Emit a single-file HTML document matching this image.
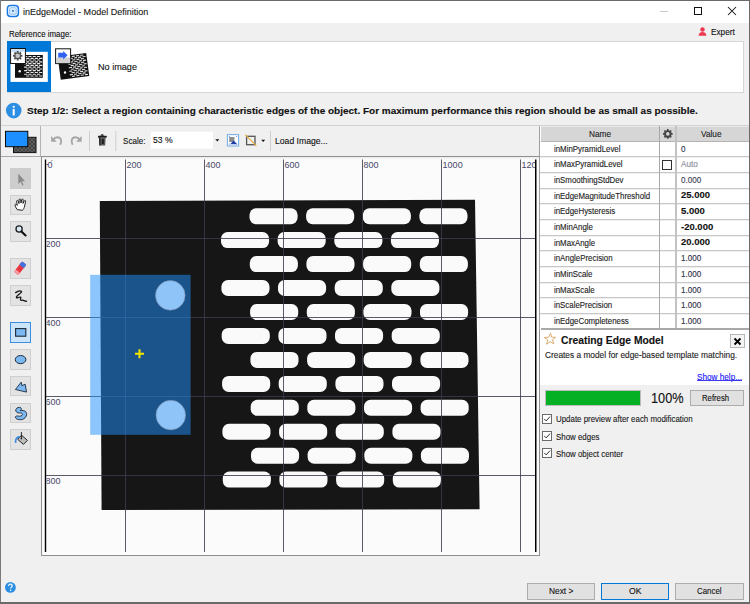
<!DOCTYPE html>
<html><head><meta charset="utf-8">
<style>
*{margin:0;padding:0;box-sizing:border-box}
html,body{width:750px;height:604px;overflow:hidden;background:#f0f0f0}
body{position:relative;font-family:"Liberation Sans",sans-serif;color:#000}
.a{position:absolute}
.t{position:absolute;white-space:nowrap;line-height:1;transform-origin:0 0;-webkit-text-stroke:0.12px currentColor}
svg{position:absolute;overflow:visible}
</style></head><body>
<div class="a" style="left:0;top:0;width:750px;height:23px;background:#fff"></div>
<svg style="left:6px;top:4px" width="14" height="14" viewBox="0 0 14 14">
<rect x="1.4" y="1.5" width="11" height="11" rx="3.2" fill="none" stroke="#1a78e6" stroke-width="1.5"/>
<rect x="3.6" y="3.7" width="6.6" height="6.6" rx="1.2" fill="#d8ebfc" stroke="#8ec3f5" stroke-width="1"/>
<path d="M5.6 6.3H8.3L6.95 8.2Z" fill="#1b5fb0"/>
</svg>
<div class="t" style="left:22.6px;top:6.6px;font-size:9.8px;color:#1a1a1a;transform:scaleX(0.92);">inEdgeModel - Model Definition</div>
<div class="a" style="left:660px;top:11px;width:8px;height:1px;background:#c9c9c9"></div>
<div class="a" style="left:694px;top:7px;width:8px;height:8px;border:1px solid #111"></div>
<svg style="left:727px;top:6px" width="10" height="10"><path d="M1 1L9 9M9 1L1 9" stroke="#111" stroke-width="1.05"/></svg>
<div class="t" style="left:9.0px;top:29.9px;font-size:9px;color:#111;transform:scaleX(0.88);">Reference image:</div>
<svg style="left:697px;top:26px" width="11" height="11" viewBox="0 0 11 11">
<circle cx="5.5" cy="3.5" r="2.25" fill="#ec3a50"/>
<path d="M1.6 9.7C1.7 7.4 3.2 6.1 5.5 6.1S9.3 7.4 9.4 9.7Z" fill="#ec3a50"/>
</svg>
<div class="t" style="left:710.6px;top:27.9px;font-size:9px;color:#111;transform:scaleX(0.915);">Expert</div>
<div class="a" style="left:7px;top:41px;width:737px;height:52px;background:#fff;border:1px solid #d6d6d6"></div>
<div class="a" style="left:7px;top:41px;width:44px;height:51px;background:#0078d7"></div>
<svg style="left:0;top:0" width="100" height="100">
<rect x="10.5" y="51.8" width="37.3" height="30.1" fill="#fff"/>
<rect x="15" y="55" width="27.8" height="22.8" fill="#111"/>
<g fill="#e8e8e8"><rect x="24.0" y="56.0" width="3.3" height="1.1" rx="0.5"/><rect x="28.3" y="56.0" width="3.3" height="1.1" rx="0.5"/><rect x="32.6" y="56.0" width="3.3" height="1.1" rx="0.5"/><rect x="36.9" y="56.0" width="3.3" height="1.1" rx="0.5"/><rect x="26.1" y="57.8" width="3.3" height="1.1" rx="0.5"/><rect x="30.4" y="57.8" width="3.3" height="1.1" rx="0.5"/><rect x="34.7" y="57.8" width="3.3" height="1.1" rx="0.5"/><rect x="39.0" y="57.8" width="3.3" height="1.1" rx="0.5"/><rect x="24.0" y="59.5" width="3.3" height="1.1" rx="0.5"/><rect x="28.3" y="59.5" width="3.3" height="1.1" rx="0.5"/><rect x="32.6" y="59.5" width="3.3" height="1.1" rx="0.5"/><rect x="36.9" y="59.5" width="3.3" height="1.1" rx="0.5"/><rect x="26.1" y="61.3" width="3.3" height="1.1" rx="0.5"/><rect x="30.4" y="61.3" width="3.3" height="1.1" rx="0.5"/><rect x="34.7" y="61.3" width="3.3" height="1.1" rx="0.5"/><rect x="39.0" y="61.3" width="3.3" height="1.1" rx="0.5"/><rect x="24.0" y="63.1" width="3.3" height="1.1" rx="0.5"/><rect x="28.3" y="63.1" width="3.3" height="1.1" rx="0.5"/><rect x="32.6" y="63.1" width="3.3" height="1.1" rx="0.5"/><rect x="36.9" y="63.1" width="3.3" height="1.1" rx="0.5"/><rect x="26.1" y="64.8" width="3.3" height="1.1" rx="0.5"/><rect x="30.4" y="64.8" width="3.3" height="1.1" rx="0.5"/><rect x="34.7" y="64.8" width="3.3" height="1.1" rx="0.5"/><rect x="39.0" y="64.8" width="3.3" height="1.1" rx="0.5"/><rect x="24.0" y="66.6" width="3.3" height="1.1" rx="0.5"/><rect x="28.3" y="66.6" width="3.3" height="1.1" rx="0.5"/><rect x="32.6" y="66.6" width="3.3" height="1.1" rx="0.5"/><rect x="36.9" y="66.6" width="3.3" height="1.1" rx="0.5"/><rect x="26.1" y="68.4" width="3.3" height="1.1" rx="0.5"/><rect x="30.4" y="68.4" width="3.3" height="1.1" rx="0.5"/><rect x="34.7" y="68.4" width="3.3" height="1.1" rx="0.5"/><rect x="39.0" y="68.4" width="3.3" height="1.1" rx="0.5"/><rect x="24.0" y="70.1" width="3.3" height="1.1" rx="0.5"/><rect x="28.3" y="70.1" width="3.3" height="1.1" rx="0.5"/><rect x="32.6" y="70.1" width="3.3" height="1.1" rx="0.5"/><rect x="36.9" y="70.1" width="3.3" height="1.1" rx="0.5"/><rect x="26.1" y="71.9" width="3.3" height="1.1" rx="0.5"/><rect x="30.4" y="71.9" width="3.3" height="1.1" rx="0.5"/><rect x="34.7" y="71.9" width="3.3" height="1.1" rx="0.5"/><rect x="39.0" y="71.9" width="3.3" height="1.1" rx="0.5"/><rect x="24.0" y="73.7" width="3.3" height="1.1" rx="0.5"/><rect x="28.3" y="73.7" width="3.3" height="1.1" rx="0.5"/><rect x="32.6" y="73.7" width="3.3" height="1.1" rx="0.5"/><rect x="36.9" y="73.7" width="3.3" height="1.1" rx="0.5"/><rect x="26.1" y="75.4" width="3.3" height="1.1" rx="0.5"/><rect x="30.4" y="75.4" width="3.3" height="1.1" rx="0.5"/><rect x="34.7" y="75.4" width="3.3" height="1.1" rx="0.5"/><rect x="39.0" y="75.4" width="3.3" height="1.1" rx="0.5"/></g>
<circle cx="19.7" cy="71.3" r="1.2" fill="#fff"/>
<rect x="10.6" y="48.5" width="14.8" height="15" fill="#fff" stroke="#111" stroke-width="1"/>
<rect x="11.1" y="49" width="13.8" height="2.8" fill="#c5def5"/>
<path d="M21.09 54.92L22.41 54.86L22.41 56.74L21.09 56.68L20.72 57.57L21.69 58.47L20.37 59.79L19.47 58.82L18.58 59.19L18.64 60.51L16.76 60.51L16.82 59.19L15.93 58.82L15.03 59.79L13.71 58.47L14.68 57.57L14.31 56.68L12.99 56.74L12.99 54.86L14.31 54.92L14.68 54.03L13.71 53.13L15.03 51.81L15.93 52.78L16.82 52.41L16.76 51.09L18.64 51.09L18.58 52.41L19.47 52.78L20.37 51.81L21.69 53.13L20.72 54.03Z" fill="#4d4d4d"/>
<circle cx="17.7" cy="55.8" r="2.3" fill="#c4c4c4"/>
<g transform="rotate(-7.6 73.5 66.4)">
<rect x="59.1" y="54.75" width="28.75" height="23.3" fill="#111"/>
<g fill="#e8e8e8"><rect x="68.6" y="55.8" width="3.3" height="1.1" rx="0.5"/><rect x="72.9" y="55.8" width="3.3" height="1.1" rx="0.5"/><rect x="77.2" y="55.8" width="3.3" height="1.1" rx="0.5"/><rect x="81.5" y="55.8" width="3.3" height="1.1" rx="0.5"/><rect x="70.7" y="57.6" width="3.3" height="1.1" rx="0.5"/><rect x="75.0" y="57.6" width="3.3" height="1.1" rx="0.5"/><rect x="79.3" y="57.6" width="3.3" height="1.1" rx="0.5"/><rect x="83.6" y="57.6" width="3.3" height="1.1" rx="0.5"/><rect x="68.6" y="59.4" width="3.3" height="1.1" rx="0.5"/><rect x="72.9" y="59.4" width="3.3" height="1.1" rx="0.5"/><rect x="77.2" y="59.4" width="3.3" height="1.1" rx="0.5"/><rect x="81.5" y="59.4" width="3.3" height="1.1" rx="0.5"/><rect x="70.7" y="61.2" width="3.3" height="1.1" rx="0.5"/><rect x="75.0" y="61.2" width="3.3" height="1.1" rx="0.5"/><rect x="79.3" y="61.2" width="3.3" height="1.1" rx="0.5"/><rect x="83.6" y="61.2" width="3.3" height="1.1" rx="0.5"/><rect x="68.6" y="63.0" width="3.3" height="1.1" rx="0.5"/><rect x="72.9" y="63.0" width="3.3" height="1.1" rx="0.5"/><rect x="77.2" y="63.0" width="3.3" height="1.1" rx="0.5"/><rect x="81.5" y="63.0" width="3.3" height="1.1" rx="0.5"/><rect x="70.7" y="64.8" width="3.3" height="1.1" rx="0.5"/><rect x="75.0" y="64.8" width="3.3" height="1.1" rx="0.5"/><rect x="79.3" y="64.8" width="3.3" height="1.1" rx="0.5"/><rect x="83.6" y="64.8" width="3.3" height="1.1" rx="0.5"/><rect x="68.6" y="66.6" width="3.3" height="1.1" rx="0.5"/><rect x="72.9" y="66.6" width="3.3" height="1.1" rx="0.5"/><rect x="77.2" y="66.6" width="3.3" height="1.1" rx="0.5"/><rect x="81.5" y="66.6" width="3.3" height="1.1" rx="0.5"/><rect x="70.7" y="68.4" width="3.3" height="1.1" rx="0.5"/><rect x="75.0" y="68.4" width="3.3" height="1.1" rx="0.5"/><rect x="79.3" y="68.4" width="3.3" height="1.1" rx="0.5"/><rect x="83.6" y="68.4" width="3.3" height="1.1" rx="0.5"/><rect x="68.6" y="70.2" width="3.3" height="1.1" rx="0.5"/><rect x="72.9" y="70.2" width="3.3" height="1.1" rx="0.5"/><rect x="77.2" y="70.2" width="3.3" height="1.1" rx="0.5"/><rect x="81.5" y="70.2" width="3.3" height="1.1" rx="0.5"/><rect x="70.7" y="72.0" width="3.3" height="1.1" rx="0.5"/><rect x="75.0" y="72.0" width="3.3" height="1.1" rx="0.5"/><rect x="79.3" y="72.0" width="3.3" height="1.1" rx="0.5"/><rect x="83.6" y="72.0" width="3.3" height="1.1" rx="0.5"/><rect x="68.6" y="73.8" width="3.3" height="1.1" rx="0.5"/><rect x="72.9" y="73.8" width="3.3" height="1.1" rx="0.5"/><rect x="77.2" y="73.8" width="3.3" height="1.1" rx="0.5"/><rect x="81.5" y="73.8" width="3.3" height="1.1" rx="0.5"/><rect x="70.7" y="75.6" width="3.3" height="1.1" rx="0.5"/><rect x="75.0" y="75.6" width="3.3" height="1.1" rx="0.5"/><rect x="79.3" y="75.6" width="3.3" height="1.1" rx="0.5"/><rect x="83.6" y="75.6" width="3.3" height="1.1" rx="0.5"/></g>
<circle cx="64.3" cy="71.3" r="1.2" fill="#fff"/>
</g>
<rect x="55.6" y="48.8" width="15" height="14.8" fill="#fff" stroke="#111" stroke-width="1"/>
<rect x="56.1" y="57.5" width="14" height="5.6" fill="#d0d0d0"/>
<path d="M58.2 52.8H63.2V50.9L67.6 55.2L63.2 59.5V57.6H58.2Z" fill="#2f62f0"/>
</svg>
<div class="t" style="left:98.0px;top:62.6px;font-size:9.3px;color:#111;transform:scaleX(0.98);">No image</div>
<svg style="left:5px;top:101.5px" width="18" height="18" viewBox="0 0 18 18">
<circle cx="8.7" cy="8.6" r="7.8" fill="#2d8fe3"/>
<rect x="7.7" y="7" width="2" height="6.5" fill="#fff"/><circle cx="8.7" cy="4.8" r="1.15" fill="#fff"/>
</svg>
<div class="t" style="left:27.0px;top:105.6px;font-size:9.8px;font-weight:bold;color:#111;transform:scaleX(1.02);">Step 1/2: Select a region containing characteristic edges of the object. For maximum performance this region should be as small as possible.</div>
<div class="a" style="left:0;top:125px;width:750px;height:1px;background:#d2d2d2"></div>
<div class="a" style="left:40px;top:126px;width:1px;height:30px;background:#b4b4b4"></div>
<div class="a" style="left:1px;top:156px;width:40px;height:1px;background:#a8a8a8"></div>
<svg style="left:0;top:0" width="300" height="160">
<defs><pattern id="chk" width="4" height="4" patternUnits="userSpaceOnUse" x="13" y="137"><rect width="4" height="4" fill="#424242"/><rect width="2" height="2" fill="#5e5e5e"/><rect x="2" y="2" width="2" height="2" fill="#5e5e5e"/></pattern></defs>
<rect x="13.5" y="137.3" width="22.5" height="15.3" fill="url(#chk)" stroke="#111" stroke-width="1"/>
<rect x="5.5" y="131.3" width="22.3" height="15.4" fill="#1e8fff" stroke="#0a0a0a" stroke-width="1"/>
<path d="M51.1 135.9V141.7H56.8Z" fill="#a6a6a6"/><path d="M53.2 139.6C55.2 136.6 59.6 136.3 60.9 139.5C61.6 141.4 61.1 143.3 60.1 144.8" fill="none" stroke="#a6a6a6" stroke-width="1.9"/>
<path d="M81.7 135.9V141.7H76Z" fill="#a6a6a6"/><path d="M79.6 139.6C77.6 136.6 73.2 136.3 71.9 139.5C71.2 141.4 71.7 143.3 72.7 144.8" fill="none" stroke="#a6a6a6" stroke-width="1.9"/>
<rect x="89" y="131" width="1" height="20" fill="#cfcfcf"/>
<rect x="115.3" y="131" width="1" height="20" fill="#cfcfcf"/>
<rect x="270" y="131" width="1" height="20" fill="#cfcfcf"/>
<path d="M100.4 136.2C100.6 134.6 101.4 134 102.2 134S103.8 134.6 104 136.2Z" fill="#555"/>
<rect x="98" y="135.8" width="8.6" height="1.9" rx="0.5" fill="#1c1c1c"/>
<path d="M99 137.6H105.6L105.2 145.6H99.4Z" fill="#5a5a5a"/>
<path d="M99 137.6H100.4L100.6 145.6H99.4Z" fill="#222"/>
<rect x="101.9" y="139" width="2" height="5" fill="#222"/>
<rect x="150.7" y="131.7" width="62.3" height="17" fill="#fff"/>
<path d="M215.3 139.2H219.3L217.3 141.6Z" fill="#111"/>
<rect x="227.4" y="134.6" width="11.2" height="11.4" fill="#fff" stroke="#7ab0e6" stroke-width="1.1"/>
<rect x="229.2" y="137" width="5.2" height="5" fill="#8c8c8c"/>
<path d="M230.2 144.2L233.6 140.6L237.2 144.2Z" fill="#1d3fa6"/>
<g fill="#3a6ee0"><circle cx="229.3" cy="136.6" r="0.5"/><circle cx="236.7" cy="136.6" r="0.5"/><circle cx="229.3" cy="144" r="0.5"/><circle cx="236.7" cy="144" r="0.5"/></g>
<rect x="246.6" y="136.3" width="8.4" height="8.4" fill="none" stroke="#555" stroke-width="1.3"/>
<path d="M245.2 134.6L256.4 145.9" stroke="#eeb040" stroke-width="1.2"/>
<path d="M261.2 139.7H265.2L263.2 142Z" fill="#111"/>
</svg>
<div class="t" style="left:122.6px;top:135.6px;font-size:9.6px;color:#111;transform:scaleX(0.84);">Scale:</div>
<div class="t" style="left:152.9px;top:134.8px;font-size:9.5px;color:#111;transform:scaleX(0.91);">53 %</div>
<div class="t" style="left:274.6px;top:136.0px;font-size:9.4px;color:#111;transform:scaleX(0.92);">Load Image...</div>
<div class="a" style="left:10.2px;top:168.2px;width:20.8px;height:20.5px;background:#cdcdcd;border:1px solid #cdcdcd"></div>
<div class="a" style="left:10.2px;top:194.7px;width:20.8px;height:20.5px;background:#e3e3e3;border:1px solid #cfcfcf"></div>
<div class="a" style="left:10.2px;top:221.3px;width:20.8px;height:20.5px;background:#e3e3e3;border:1px solid #cfcfcf"></div>
<div class="a" style="left:10.2px;top:258.3px;width:20.8px;height:20.5px;background:#e3e3e3;border:1px solid #cfcfcf"></div>
<div class="a" style="left:10.2px;top:285.1px;width:20.8px;height:20.5px;background:#e3e3e3;border:1px solid #cfcfcf"></div>
<div class="a" style="left:10.2px;top:322.0px;width:20.8px;height:20.5px;background:#cce4f7;border:1px solid #3d8ee0"></div>
<div class="a" style="left:10.2px;top:349.3px;width:20.8px;height:20.5px;background:#e3e3e3;border:1px solid #cfcfcf"></div>
<div class="a" style="left:10.2px;top:375.9px;width:20.8px;height:20.5px;background:#e3e3e3;border:1px solid #cfcfcf"></div>
<div class="a" style="left:10.2px;top:402.8px;width:20.8px;height:20.5px;background:#e3e3e3;border:1px solid #cfcfcf"></div>
<div class="a" style="left:10.2px;top:429.4px;width:20.8px;height:20.5px;background:#e3e3e3;border:1px solid #cfcfcf"></div>
<svg style="left:0;top:0" width="40" height="460">
<path d="M18.3 173.5V184L20.6 181.7L22.4 185.5L23.6 184.9L21.8 181.2H25Z" fill="#8a8a8a"/>
<path d="M17.2 209.6C16.2 208.4 15.5 207 15.1 205.2C14.9 204.2 15.6 203.9 16.3 204.5L17.3 205.4L16.6 201.4C16.4 200.5 17.6 200 18 200.9L19 203.6L19.1 199.7C19.1 198.7 20.5 198.6 20.6 199.6L21 203L21.7 199.6C21.9 198.8 23.2 198.9 23.2 199.8L23 203.4L24.4 200.8C24.8 200.2 25.9 200.5 25.7 201.3L24.6 206C24.2 208 23.4 209.6 22.3 210.3Z" fill="#fff" stroke="#111" stroke-width="0.9" stroke-linejoin="round"/>
<circle cx="19.1" cy="229" r="3.1" fill="#d7e8f7" stroke="#1e1e1e" stroke-width="1.3"/>
<path d="M21.4 231.4L25.6 235.5" stroke="#111" stroke-width="2.1" stroke-linecap="round"/>
<g transform="rotate(-52 20.2 268.2)"><rect x="13.6" y="265.4" width="13.2" height="5.6" rx="1.6" fill="#e9353f"/><rect x="22.4" y="265.4" width="4.4" height="5.6" rx="1.2" fill="#3f74e2"/><rect x="13.6" y="265.4" width="3" height="5.6" rx="1.4" fill="#f59aa0"/></g>
<path d="M15.6 292.6C17.3 291.4 20.3 290.6 21.4 291.3C22.2 292 19.4 294 17.6 295.6C15.8 297.1 16.2 298.3 17.5 297.8C18.8 297.3 20.3 296.6 20.8 297.2C21.3 297.8 19.8 299.4 20.6 300.1C21.5 300.8 22.3 299.8 23.4 300.3C24.5 300.8 25.5 301.5 26.5 301.2" fill="none" stroke="#141414" stroke-width="1.3" stroke-linecap="round" stroke-linejoin="round"/>
<rect x="15.6" y="328.6" width="10.2" height="7.6" fill="#7cb8f2" stroke="#1b2a3a" stroke-width="1.1"/>
<ellipse cx="20.6" cy="359.6" rx="5.3" ry="4.1" fill="#7cb8f2" stroke="#1b2a3a" stroke-width="1"/>
<path d="M15.4 389.5L21.2 382.2L21.9 385.6L25.2 384.3L26.5 392.1Z" fill="#7cb8f2" stroke="#1b2a3a" stroke-width="0.9" stroke-linejoin="round"/>
<path d="M15.8 409.5C16.5 407.5 19.5 406.8 20.9 407.8C21.9 408.6 21.3 409.8 20.3 410.6C22.3 410.1 26.3 410.5 26.6 413.6C26.9 417 24 419.6 20.6 419.7C17.6 419.8 15.3 418.6 15.4 417.1C15.5 416 16.7 415.7 18.2 416.1C20.3 416.6 22.3 415.8 22.4 414.4C22.5 413.1 20.8 412.8 19.2 413C17.3 413.2 15.2 411.6 15.8 409.5Z" fill="#7cb8f2" stroke="#1b2a3a" stroke-width="0.9" stroke-linejoin="round"/>
<path d="M17.6 439.2L21.6 435.2L27.4 440.4L23.4 444.4Z" fill="#bdbdbd" stroke="#1a1a1a" stroke-width="0.95" stroke-linejoin="round"/>
<path d="M21.4 432V438.6" stroke="#1a1a1a" stroke-width="0.9"/><circle cx="21.4" cy="438.6" r="0.8" fill="#1a1a1a"/>
<path d="M15.6 442.2C15.4 439.4 16.8 437 19.2 436.8" fill="none" stroke="#3b8be0" stroke-width="1.7" stroke-linecap="round"/>
</svg>
<div class="a" style="left:41px;top:156px;width:499px;height:400px;background:#fbfbfb;border:1px solid #8f8f8f"></div>
<svg style="left:0;top:0" width="750" height="604">
<defs><clipPath id="cv"><rect x="42" y="157" width="497" height="398"/></clipPath><clipPath id="lc"><rect x="46.6" y="157" width="489" height="398"/></clipPath></defs>
<g clip-path="url(#cv)">
<polygon points="99.8,201 475,199.8 479.6,509.2 101.6,510" fill="#161616"/>
<g fill="#fafafa"><rect x="249.5" y="208.2" width="48.1" height="16" rx="6.6"/><rect x="306.1" y="208.2" width="48.1" height="16" rx="6.6"/><rect x="362.8" y="208.2" width="48.1" height="16" rx="6.6"/><rect x="419.4" y="208.2" width="48.1" height="16" rx="6.6"/><rect x="221.0" y="232.1" width="48.1" height="16" rx="6.6"/><rect x="277.6" y="232.1" width="48.1" height="16" rx="6.6"/><rect x="334.3" y="232.1" width="48.1" height="16" rx="6.6"/><rect x="390.9" y="232.1" width="48.1" height="16" rx="6.6"/><rect x="249.8" y="256.1" width="48.1" height="16" rx="6.6"/><rect x="306.4" y="256.1" width="48.1" height="16" rx="6.6"/><rect x="363.1" y="256.1" width="48.1" height="16" rx="6.6"/><rect x="419.8" y="256.1" width="48.1" height="16" rx="6.6"/><rect x="221.4" y="280.0" width="48.1" height="16" rx="6.6"/><rect x="278.0" y="280.0" width="48.1" height="16" rx="6.6"/><rect x="334.7" y="280.0" width="48.1" height="16" rx="6.6"/><rect x="391.3" y="280.0" width="48.1" height="16" rx="6.6"/><rect x="250.1" y="304.0" width="48.1" height="16" rx="6.6"/><rect x="306.8" y="304.0" width="48.1" height="16" rx="6.6"/><rect x="363.4" y="304.0" width="48.1" height="16" rx="6.6"/><rect x="420.0" y="304.0" width="48.1" height="16" rx="6.6"/><rect x="221.7" y="327.9" width="48.1" height="16" rx="6.6"/><rect x="278.4" y="327.9" width="48.1" height="16" rx="6.6"/><rect x="335.0" y="327.9" width="48.1" height="16" rx="6.6"/><rect x="391.7" y="327.9" width="48.1" height="16" rx="6.6"/><rect x="250.4" y="351.9" width="48.1" height="16" rx="6.6"/><rect x="307.1" y="351.9" width="48.1" height="16" rx="6.6"/><rect x="363.7" y="351.9" width="48.1" height="16" rx="6.6"/><rect x="420.4" y="351.9" width="48.1" height="16" rx="6.6"/><rect x="222.1" y="375.9" width="48.1" height="16" rx="6.6"/><rect x="278.7" y="375.9" width="48.1" height="16" rx="6.6"/><rect x="335.4" y="375.9" width="48.1" height="16" rx="6.6"/><rect x="392.0" y="375.9" width="48.1" height="16" rx="6.6"/><rect x="250.7" y="399.8" width="48.1" height="16" rx="6.6"/><rect x="307.3" y="399.8" width="48.1" height="16" rx="6.6"/><rect x="364.0" y="399.8" width="48.1" height="16" rx="6.6"/><rect x="420.6" y="399.8" width="48.1" height="16" rx="6.6"/><rect x="222.4" y="423.8" width="48.1" height="16" rx="6.6"/><rect x="279.1" y="423.8" width="48.1" height="16" rx="6.6"/><rect x="335.7" y="423.8" width="48.1" height="16" rx="6.6"/><rect x="392.4" y="423.8" width="48.1" height="16" rx="6.6"/><rect x="251.0" y="447.7" width="48.1" height="16" rx="6.6"/><rect x="307.6" y="447.7" width="48.1" height="16" rx="6.6"/><rect x="364.3" y="447.7" width="48.1" height="16" rx="6.6"/><rect x="420.9" y="447.7" width="48.1" height="16" rx="6.6"/><rect x="222.8" y="471.6" width="48.1" height="16" rx="6.6"/><rect x="279.4" y="471.6" width="48.1" height="16" rx="6.6"/><rect x="336.1" y="471.6" width="48.1" height="16" rx="6.6"/><rect x="392.8" y="471.6" width="48.1" height="16" rx="6.6"/></g>
<g fill="#3a3a4b" fill-opacity="0.84"><rect x="125" y="159.5" width="1" height="392.5"/><rect x="204" y="159.5" width="1" height="392.5"/><rect x="283" y="159.5" width="1" height="392.5"/><rect x="362" y="159.5" width="1" height="392.5"/><rect x="441" y="159.5" width="1" height="392.5"/><rect x="520" y="159.5" width="1" height="392.5"/><rect x="46" y="238" width="489" height="1"/><rect x="46" y="317" width="489" height="1"/><rect x="46" y="396" width="489" height="1"/><rect x="46" y="475" width="489" height="1"/></g>
<g font-family="Liberation Sans" font-size="9" fill="#474768" letter-spacing="0.1" clip-path="url(#lc)"><text x="47.4" y="167.9">0</text><text x="126.4" y="167.9">200</text><text x="205.4" y="167.9">400</text><text x="284.4" y="167.9">600</text><text x="363.4" y="167.9">800</text><text x="442.4" y="167.9">1000</text><text x="521.4" y="167.9">1200</text><text x="45.4" y="246.9">200</text><text x="45.4" y="325.9">400</text><text x="45.4" y="404.9">600</text><text x="45.4" y="483.9">800</text></g>
<rect x="42" y="157" width="497" height="1.6" fill="#ededed"/><path d="M46.5 164.5H48.2M51.2 161.4L52.2 160.2" stroke="#3a3a50" stroke-width="0.8"/>
<rect x="44.8" y="159.5" width="1.4" height="392.5" fill="#000"/>
<rect x="535" y="159.5" width="1.5" height="392.5" fill="#000"/>
<rect x="90.2" y="274.8" width="100.4" height="160" fill="rgba(34,146,252,0.51)"/>
<circle cx="170.3" cy="295.4" r="14.8" fill="#8ec4f8" stroke="#7a8fb0" stroke-width="0.6"/>
<circle cx="170.8" cy="415.1" r="14.8" fill="#8ec4f8" stroke="#7a8fb0" stroke-width="0.6"/>
<path d="M139.5 349.3V358.3M135 353.8H144" stroke="#f5e400" stroke-width="2"/>
</g>
</svg>
<div class="a" style="left:539px;top:126px;width:210px;height:204px;background:#fff;border-left:1px solid #a0a0a0"></div>
<div class="a" style="left:541px;top:126px;width:208px;height:15.5px;background:#d6d6d6;border-top:1px solid #e9e9e9;border-bottom:1px solid #b4b4b4"></div>
<div class="t" style="left:554.2px;top:144.73px;font-size:8.6px;color:#222;transform:scaleX(0.915);">inMinPyramidLevel</div>
<div class="t" style="left:681.0px;top:144.73px;font-size:8.8px;color:#2e2e44;transform:scaleX(0.92);">0</div>
<div class="a" style="left:540px;top:156px;width:209px;height:1px;background:#c8c8c8"></div><div class="a" style="left:540px;top:157px;width:209px;height:1px;background:#efefef"></div>
<div class="t" style="left:554.2px;top:160.4px;font-size:8.6px;color:#222;transform:scaleX(0.915);">inMaxPyramidLevel</div>
<div class="t" style="left:681.0px;top:160.4px;font-size:8.8px;color:#8a8a98;transform:scaleX(0.92);">Auto</div>
<div class="a" style="left:540px;top:172px;width:209px;height:1px;background:#c8c8c8"></div><div class="a" style="left:540px;top:173px;width:209px;height:1px;background:#efefef"></div>
<div class="t" style="left:554.2px;top:176.07px;font-size:8.6px;color:#222;transform:scaleX(0.915);">inSmoothingStdDev</div>
<div class="t" style="left:681.0px;top:176.07px;font-size:8.8px;color:#3a3a50;transform:scaleX(0.92);">0.000</div>
<div class="a" style="left:540px;top:188px;width:209px;height:1px;background:#c8c8c8"></div><div class="a" style="left:540px;top:189px;width:209px;height:1px;background:#efefef"></div>
<div class="t" style="left:554.2px;top:191.74px;font-size:8.6px;color:#222;transform:scaleX(0.915);">inEdgeMagnitudeThreshold</div>
<div class="t" style="left:681.0px;top:190.34px;font-size:9.5px;font-weight:bold;color:#111;">25.000</div>
<div class="a" style="left:540px;top:203px;width:209px;height:1px;background:#c8c8c8"></div><div class="a" style="left:540px;top:204px;width:209px;height:1px;background:#efefef"></div>
<div class="t" style="left:554.2px;top:207.41px;font-size:8.6px;color:#222;transform:scaleX(0.915);">inEdgeHysteresis</div>
<div class="t" style="left:681.0px;top:206.01px;font-size:9.5px;font-weight:bold;color:#111;">5.000</div>
<div class="a" style="left:540px;top:219px;width:209px;height:1px;background:#c8c8c8"></div><div class="a" style="left:540px;top:220px;width:209px;height:1px;background:#efefef"></div>
<div class="t" style="left:554.2px;top:223.08px;font-size:8.6px;color:#222;transform:scaleX(0.915);">inMinAngle</div>
<div class="t" style="left:681.0px;top:221.68px;font-size:9.5px;font-weight:bold;color:#111;">-20.000</div>
<div class="a" style="left:540px;top:235px;width:209px;height:1px;background:#c8c8c8"></div><div class="a" style="left:540px;top:236px;width:209px;height:1px;background:#efefef"></div>
<div class="t" style="left:554.2px;top:238.75px;font-size:8.6px;color:#222;transform:scaleX(0.915);">inMaxAngle</div>
<div class="t" style="left:681.0px;top:237.35px;font-size:9.5px;font-weight:bold;color:#111;">20.000</div>
<div class="a" style="left:540px;top:250px;width:209px;height:1px;background:#c8c8c8"></div><div class="a" style="left:540px;top:251px;width:209px;height:1px;background:#efefef"></div>
<div class="t" style="left:554.2px;top:254.42px;font-size:8.6px;color:#222;transform:scaleX(0.915);">inAnglePrecision</div>
<div class="t" style="left:681.0px;top:254.42px;font-size:8.8px;color:#2e2e44;transform:scaleX(0.92);">1.000</div>
<div class="a" style="left:540px;top:266px;width:209px;height:1px;background:#c8c8c8"></div><div class="a" style="left:540px;top:267px;width:209px;height:1px;background:#efefef"></div>
<div class="t" style="left:554.2px;top:270.09px;font-size:8.6px;color:#222;transform:scaleX(0.915);">inMinScale</div>
<div class="t" style="left:681.0px;top:270.09px;font-size:8.8px;color:#2e2e44;transform:scaleX(0.92);">1.000</div>
<div class="a" style="left:540px;top:282px;width:209px;height:1px;background:#c8c8c8"></div><div class="a" style="left:540px;top:283px;width:209px;height:1px;background:#efefef"></div>
<div class="t" style="left:554.2px;top:285.76px;font-size:8.6px;color:#222;transform:scaleX(0.915);">inMaxScale</div>
<div class="t" style="left:681.0px;top:285.76px;font-size:8.8px;color:#2e2e44;transform:scaleX(0.92);">1.000</div>
<div class="a" style="left:540px;top:297px;width:209px;height:1px;background:#c8c8c8"></div><div class="a" style="left:540px;top:298px;width:209px;height:1px;background:#efefef"></div>
<div class="t" style="left:554.2px;top:301.43px;font-size:8.6px;color:#222;transform:scaleX(0.915);">inScalePrecision</div>
<div class="t" style="left:681.0px;top:301.43px;font-size:8.8px;color:#2e2e44;transform:scaleX(0.92);">1.000</div>
<div class="a" style="left:540px;top:313px;width:209px;height:1px;background:#c8c8c8"></div><div class="a" style="left:540px;top:314px;width:209px;height:1px;background:#efefef"></div>
<div class="t" style="left:554.2px;top:317.1px;font-size:8.6px;color:#222;transform:scaleX(0.915);">inEdgeCompleteness</div>
<div class="t" style="left:681.0px;top:317.1px;font-size:8.8px;color:#2e2e44;transform:scaleX(0.92);">1.000</div>
<div class="a" style="left:659.3px;top:126px;width:1px;height:203px;background:#a8a8a8"></div>
<div class="a" style="left:675.2px;top:126px;width:1.4px;height:203px;background:#c2c2c2"></div>
<div class="a" style="left:541px;top:328px;width:208px;height:1.5px;background:#a8a8a8"></div>
<div class="a" style="left:662px;top:160.4px;width:10px;height:9.8px;background:#fff;border:1px solid #333"></div>
<div class="t" style="left:588.6px;top:129.2px;font-size:9.6px;color:#1a1a1a;transform:scaleX(0.86);">Name</div>
<div class="t" style="left:701.2px;top:129.2px;font-size:9.6px;color:#1a1a1a;transform:scaleX(0.86);">Value</div>
<svg style="left:661px;top:127px" width="14" height="14" viewBox="0 0 14 14">
<path d="M10.55 6.05L11.63 6.10L11.63 7.70L10.55 7.75L10.06 8.95L10.79 9.75L9.65 10.89L8.85 10.16L7.65 10.65L7.60 11.73L6.00 11.73L5.95 10.65L4.75 10.16L3.95 10.89L2.81 9.75L3.54 8.95L3.05 7.75L1.97 7.70L1.97 6.10L3.05 6.05L3.54 4.85L2.81 4.05L3.95 2.91L4.75 3.64L5.95 3.15L6.00 2.07L7.60 2.07L7.65 3.15L8.85 3.64L9.65 2.91L10.79 4.05L10.06 4.85Z" fill="#454545"/>
<circle cx="6.8" cy="6.9" r="1.8" fill="#d7d7d7"/>
</svg>
<div class="a" style="left:540px;top:329.5px;width:209px;height:55.5px;background:#fff"></div>
<svg style="left:543px;top:331.5px" width="14" height="14" viewBox="0 0 14 14">
<path d="M7.5 1.2L8.6 5.1L12.6 5.4L9.4 7.8L10.8 11.9L7.2 9.6L3.6 12.2L4.7 8L1.3 5.6L5.6 5.2Z" fill="none" stroke="#d9a460" stroke-width="0.9" stroke-linejoin="round"/>
</svg>
<div class="t" style="left:561.2px;top:334.8px;font-size:10.6px;font-weight:bold;color:#111;transform:scaleX(0.975);">Creating Edge Model</div>
<div class="t" style="left:545.2px;top:349.8px;font-size:9.6px;color:#222;transform:scaleX(0.868);">Creates a model for edge-based template matching.</div>
<div class="a" style="left:730.4px;top:334px;width:14.4px;height:14px;background:#f4f4f4;border:1px solid #b8b8b8"></div>
<svg style="left:733px;top:337px" width="9" height="9"><path d="M1.5 1.5L7.5 7.5M7.5 1.5L1.5 7.5" stroke="#000" stroke-width="1.8"/></svg>
<div class="t" style="left:697.0px;top:373.0px;font-size:8.8px;color:#2020f5;transform:scaleX(0.93);">Show help...</div>
<div class="a" style="left:697.4px;top:380px;width:45px;height:1px;background:#3a3af5"></div>
<div class="a" style="left:545px;top:389.6px;width:96px;height:16.5px;background:#06b025;border:1px solid #bcbcbc"></div>
<div class="t" style="left:650.6px;top:390.8px;font-size:14px;color:#111;transform:scaleX(0.91);">100%</div>
<div class="a" style="left:689.9px;top:390.2px;width:53.9px;height:15.9px;background:#e1e1e1;border:1px solid #adadad"></div>
<div class="t" style="left:702.2px;top:393.5px;font-size:8.6px;color:#111;transform:scaleX(0.9);">Refresh</div>
<div class="a" style="left:542.3px;top:414.2px;width:9.6px;height:9.5px;background:#fff;border:1px solid #6b6b6b"></div>
<svg style="left:542px;top:414.2px" width="10" height="10"><path d="M2.2 4.9L4.2 6.9L8 2.6" fill="none" stroke="#222" stroke-width="0.95"/></svg>
<div class="t" style="left:556.4px;top:415.4px;font-size:9.3px;color:#1a1a1a;transform:scaleX(0.85);">Update preview after each modification</div>
<div class="a" style="left:542.3px;top:431.3px;width:9.6px;height:9.5px;background:#fff;border:1px solid #6b6b6b"></div>
<svg style="left:542px;top:431.3px" width="10" height="10"><path d="M2.2 4.9L4.2 6.9L8 2.6" fill="none" stroke="#222" stroke-width="0.95"/></svg>
<div class="t" style="left:556.4px;top:432.5px;font-size:9.3px;color:#1a1a1a;transform:scaleX(0.85);">Show edges</div>
<div class="a" style="left:542.3px;top:448.4px;width:9.6px;height:9.5px;background:#fff;border:1px solid #6b6b6b"></div>
<svg style="left:542px;top:448.4px" width="10" height="10"><path d="M2.2 4.9L4.2 6.9L8 2.6" fill="none" stroke="#222" stroke-width="0.95"/></svg>
<div class="t" style="left:556.4px;top:449.6px;font-size:9.3px;color:#1a1a1a;transform:scaleX(0.85);">Show object center</div>
<svg style="left:4px;top:581px" width="13" height="13" viewBox="0 0 13 13">
<circle cx="6.4" cy="6.4" r="5.4" fill="#2d8fe3"/>
<path d="M4.6 5C4.6 3.8 5.4 3.2 6.4 3.2S8.2 3.8 8.2 4.9C8.2 6.1 6.6 6.2 6.6 7.6" fill="none" stroke="#fff" stroke-width="1.2"/>
<circle cx="6.6" cy="9.3" r="0.75" fill="#fff"/>
</svg>
<div class="a" style="left:527.2px;top:583.2px;width:67.8px;height:16.6px;background:#e1e1e1;border:1px solid #adadad"></div>
<div class="a" style="left:601.4px;top:583.4px;width:67.8px;height:16.2px;background:#e1e1e1;border:1.6px solid #0078d7"></div>
<div class="a" style="left:675.4px;top:583.2px;width:68.4px;height:16.6px;background:#e1e1e1;border:1px solid #adadad"></div>
<div class="t" style="left:549.0px;top:586.1px;font-size:9.5px;color:#111;transform:scaleX(0.88);">Next &gt;</div>
<div class="t" style="left:628.6px;top:586.5px;font-size:9.3px;color:#111;transform:scaleX(0.93);">OK</div>
<div class="t" style="left:696.6px;top:586.5px;font-size:9.3px;color:#111;transform:scaleX(0.85);">Cancel</div>
<div class="a" style="left:0;top:0;width:750px;height:1px;background:#6a6a6a"></div>
<div class="a" style="left:0;top:0;width:1px;height:604px;background:#7a7a7a"></div>
<div class="a" style="left:749px;top:0;width:1px;height:604px;background:#6a6a6a"></div>
<div class="a" style="left:0;top:602px;width:750px;height:2px;background:#6a6a6a"></div>
</body></html>
